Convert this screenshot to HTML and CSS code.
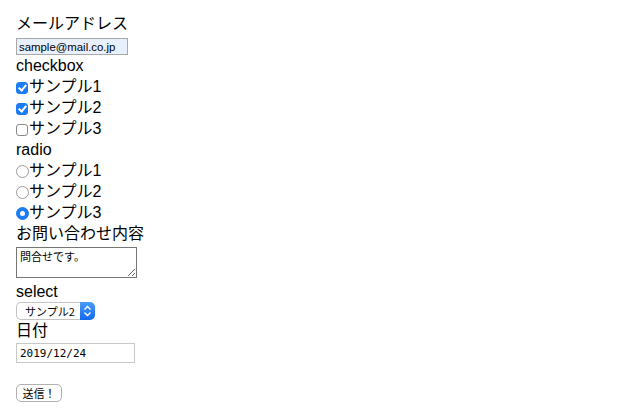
FILE: index.html
```html
<!DOCTYPE html>
<html lang="ja">
<head>
    <meta charset="UTF-8">
    <meta name="viewport" content="width=device-width, initial-scale=1.0">
    <title>フォーム</title>
    <link rel="stylesheet" href="styles.css">
</head>
<body>

<form class="form">
    <div class="label">メールアドレス</div>
    <input class="email" type="email" name="email" value="sample@mail.co.jp">

    <div class="label">checkbox</div>
    <label class="row"><input class="check" type="checkbox" name="c1" checked>サンプル1</label>
    <label class="row"><input class="check" type="checkbox" name="c2" checked>サンプル2</label>
    <label class="row"><input class="check" type="checkbox" name="c3">サンプル3</label>

    <div class="label">radio</div>
    <label class="row"><input class="radio" type="radio" name="r">サンプル1</label>
    <label class="row"><input class="radio" type="radio" name="r">サンプル2</label>
    <label class="row"><input class="radio" type="radio" name="r" checked>サンプル3</label>

    <div class="label">お問い合わせ内容</div>
    <textarea class="message" name="message">問合せです。</textarea>

    <div class="label">select</div>
    <span class="select-box">
        <select class="select" name="s">
            <option>サンプル1</option>
            <option selected>サンプル2</option>
            <option>サンプル3</option>
        </select>
        <span class="select-arrow">
            <svg width="9" height="12" viewBox="0 0 9 12">
                <path d="M1.5 4.5 L4.5 1.5 L7.5 4.5" fill="none" stroke="#fff" stroke-width="1.4"/>
                <path d="M1.5 7.5 L4.5 10.5 L7.5 7.5" fill="none" stroke="#fff" stroke-width="1.4"/>
            </svg>
        </span>
    </span>

    <div class="label">日付</div>
    <input class="date" type="text" name="date" value="2019/12/24">

    <button class="submit" type="submit">送信！</button>
</form>

</body>
</html>
```

FILE: styles.css
```css
body {
    margin: 0;
    font-family: "Liberation Sans", "Noto Sans CJK JP", sans-serif;
    font-size: 16px;
    line-height: 21px;
    color: #000;
    background-color: #fff;
}
.form {
    padding: 13px 16px;
}
.label {
    display: block;
    height: 21px;
}
.email {
    display: block;
    box-sizing: border-box;
    width: 112px;
    height: 17px;
    margin: 4px 0 0 0;
    padding: 0 2px;
    border: 1px solid #a9a9a9;
    background-color: #e8f0fe;
    font-family: "Liberation Sans", "Noto Sans CJK JP", sans-serif;
    font-size: 11.4px;
    color: #000;
}
.row {
    display: flex;
    align-items: center;
    height: 21px;
}
.check {
    appearance: none;
    -webkit-appearance: none;
    position: relative;
    box-sizing: border-box;
    width: 12px;
    height: 12px;
    margin: 2px 1px 0 0;
    border: 1px solid #8a8a8a;
    border-radius: 3px;
    background-color: #fff;
}
.check:checked {
    border-color: #1c7cf4;
    background-color: #1c7cf4;
}
.check:checked::after {
    content: "";
    position: absolute;
    left: 3px;
    top: 0px;
    width: 3px;
    height: 6px;
    border: solid #fff;
    border-width: 0 2px 2px 0;
    transform: rotate(40deg);
}
.radio {
    appearance: none;
    -webkit-appearance: none;
    position: relative;
    box-sizing: border-box;
    width: 13px;
    height: 13px;
    margin: 2px 0 0 0;
    border: 1px solid #9a9a9a;
    border-radius: 50%;
    background-color: #fff;
}
.radio:checked {
    border-color: #1c7cf4;
    background-color: #1c7cf4;
}
.radio:checked::after {
    content: "";
    position: absolute;
    left: 3px;
    top: 3px;
    width: 5px;
    height: 5px;
    border-radius: 50%;
    background-color: #fff;
}
.message {
    display: block;
    box-sizing: border-box;
    width: 121px;
    height: 31px;
    margin: 3px 0 3px 0;
    padding: 2px 3px;
    border: 1px solid #767676;
    font-family: "Noto Sans CJK JP", sans-serif;
    font-size: 11px;
    line-height: 13px;
}
.select-box {
    display: flex;
    width: 79px;
    height: 18px;
}
.select {
    appearance: none;
    -webkit-appearance: none;
    box-sizing: border-box;
    width: 64px;
    height: 18px;
    margin: 0;
    padding: 0 0 0 8px;
    border: 1px solid #c4c4c4;
    border-right: none;
    border-radius: 5px 0 0 5px;
    background-color: #fff;
    font-family: "Noto Sans CJK JP", sans-serif;
    font-size: 11px;
    color: #000;
}
.select-arrow {
    display: flex;
    align-items: center;
    justify-content: center;
    width: 15px;
    height: 18px;
    border-radius: 0 5px 5px 0;
    background: linear-gradient(#4a9cfb, #1469ec);
}
.date {
    display: block;
    box-sizing: border-box;
    width: 119px;
    height: 20px;
    margin: 2px 0 0 0;
    padding: 0 3px;
    border: 1px solid #c8c8c8;
    font-family: "DejaVu Sans Mono", monospace;
    font-size: 11px;
    color: #000;
}
.submit {
    display: block;
    box-sizing: border-box;
    width: 46px;
    height: 18px;
    margin: 21px 0 0 0;
    padding: 0;
    border: 1px solid #b0b0b0;
    border-radius: 5px;
    background-color: #fff;
    font-family: "Noto Sans CJK JP", sans-serif;
    font-size: 11px;
    line-height: 16px;
    color: #000;
}
```
